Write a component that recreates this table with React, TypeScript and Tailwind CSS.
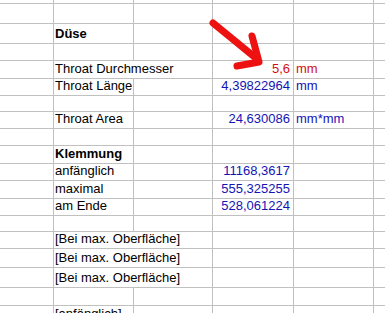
import React from "react";

type Row = {
  h: string;
  label?: string;
  bold?: boolean;
  span?: boolean;
  value?: string;
  unit?: string;
  color?: string;
};

const rows: Row[] = [
  { h: "h-[4px]" },
  { h: "h-[20px]" },
  { h: "h-[20px]", label: "Düse", bold: true },
  { h: "h-[17px]" },
  { h: "h-[18px]", label: "Throat Durchmesser", span: true, value: "5,6", unit: "mm", color: "text-[#d40f0f]" },
  { h: "h-[16px]", label: "Throat Länge", value: "4,39822964", unit: "mm", color: "text-[#1414b4]" },
  { h: "h-[17px]" },
  { h: "h-[17px]", label: "Throat Area", value: "24,630086", unit: "mm*mm", color: "text-[#1414b4]" },
  { h: "h-[17px]" },
  { h: "h-[18px]", label: "Klemmung", bold: true },
  { h: "h-[17px]", label: "anfänglich", value: "11168,3617", color: "text-[#1414b4]" },
  { h: "h-[18px]", label: "maximal", value: "555,325255", color: "text-[#1414b4]" },
  { h: "h-[15px]", label: "am Ende", value: "528,061224", color: "text-[#1414b4]" },
  { h: "h-[18px]" },
  { h: "h-[16px]", label: "[Bei max. Oberfläche]", span: true },
  { h: "h-[20px]", label: "[Bei max. Oberfläche]", span: true },
  { h: "h-[20px]", label: "[Bei max. Oberfläche]", span: true },
  { h: "h-[18px]" },
  { h: "h-[18px]", label: "[anfänglich]" },
];

const cell = "border-r border-b border-[#c0c0c0] flex items-end pb-[2px] overflow-visible whitespace-nowrap leading-[14px]";

export default function App() {
  return (
    <div className="relative w-[385px] h-[313px] overflow-hidden bg-white text-[13px] text-black" style={{ fontFamily: '"Liberation Sans", Arial, sans-serif' }}>
      <div className="flex flex-col">
        {rows.map((r, i) => (
          <div key={i} className={`grid grid-cols-[54px_80px_79px_81px_80px_1fr] ${r.h}`}>
            <div className={cell} />
            {r.span ? (
              <div className={`${cell} col-span-2 pl-[1px] ${r.bold ? "font-bold" : ""}`}>{r.label}</div>
            ) : (
              <>
                <div className={`${cell} pl-[1px] ${r.bold ? "font-bold" : ""}`}>{r.label}</div>
                <div className={cell} />
              </>
            )}
            <div className={`${cell} justify-end pr-[3px] ${r.color ?? ""}`}>{r.value}</div>
            <div className={`${cell} pl-[2px] ${r.color ?? ""}`}>{r.unit}</div>
            <div className="border-b border-[#c0c0c0]" />
          </div>
        ))}
      </div>
      <svg className="absolute left-0 top-0" width="385" height="313" viewBox="0 0 385 313">
        <g stroke="#ee1111" strokeWidth="7" strokeLinecap="round" strokeLinejoin="round" fill="none">
          <line x1="213" y1="23" x2="257" y2="59" />
          <polyline points="252,36 259,62 237,66" />
        </g>
      </svg>
    </div>
  );
}
